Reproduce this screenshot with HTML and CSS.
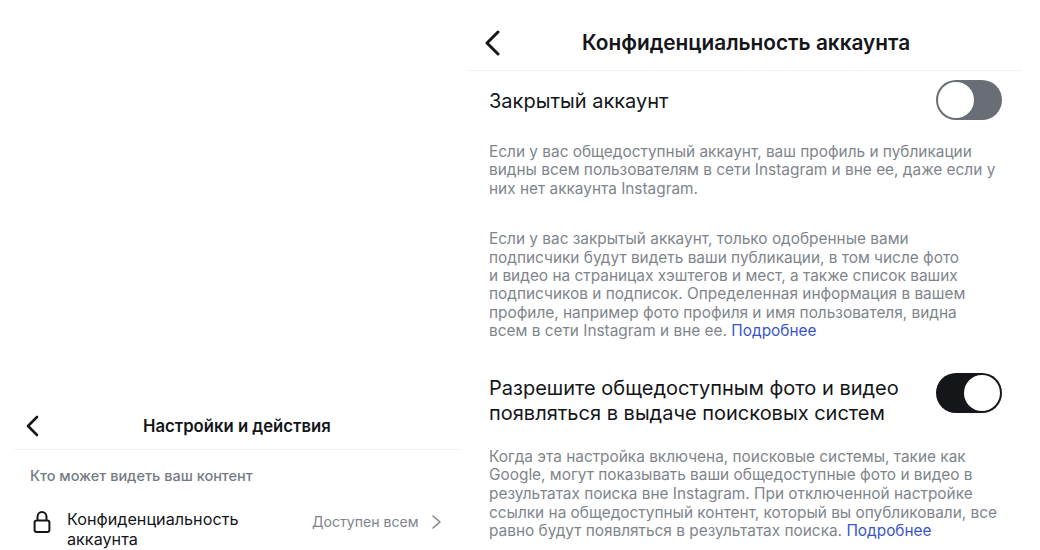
FILE: index.html
```html
<!DOCTYPE html>
<html>
<head>
<meta charset="utf-8">
<title>Настройки</title>
<link rel="stylesheet" href="styles.css">
</head>
<body>
<div class="page">
  <div class="left">
    <div class="left_head">
      <svg class="left_back" width="14" height="22" viewBox="0 0 14 22"><path d="M12 2 L3 11 L12 20" fill="none" stroke="#14161a" stroke-width="2.6" stroke-linecap="round" stroke-linejoin="round"/></svg>
      <div class="left_title">Настройки и действия</div>
    </div>
    <div class="left_label">Кто может видеть ваш контент</div>
    <div class="left_row">
      <svg class="lock" width="18" height="23" viewBox="0 0 18 23"><path d="M4.5 9.5 V6 C4.5 3 6.5 1 9 1 C11.5 1 13.5 3 13.5 6 V9.5 M3.6 9.5 H14.4 C15.6 9.5 16.4 10.3 16.4 11.5 V19 C16.4 20.2 15.6 21 14.4 21 H3.6 C2.4 21 1.6 20.2 1.6 19 V11.5 C1.6 10.3 2.4 9.5 3.6 9.5 Z" fill="none" stroke="#14161a" stroke-width="2"/></svg>
      <div class="left_name">Конфиденциальность<br>аккаунта</div>
      <div class="left_value">Доступен всем</div>
      <svg class="left_more" width="11" height="16" viewBox="0 0 11 16"><path d="M2 2 L9 8 L2 14" fill="none" stroke="#80858c" stroke-width="1.6" stroke-linecap="round" stroke-linejoin="round"/></svg>
    </div>
  </div>
  <div class="right">
    <div class="right_head">
      <svg class="right_back" width="16" height="26" viewBox="0 0 16 26"><path d="M14 2 L3 13 L14 24" fill="none" stroke="#14161a" stroke-width="3" stroke-linecap="round" stroke-linejoin="round"/></svg>
      <div class="right_title">Конфиденциальность аккаунта</div>
    </div>
    <div class="option option_first">
      <div class="option_name">Закрытый аккаунт</div>
      <div class="toggle toggle_off"><div class="knob"></div></div>
    </div>
    <p class="info info_first">Если у вас общедоступный аккаунт, ваш профиль и публикации<br>видны всем пользователям в сети Instagram и вне ее, даже если у<br>них нет аккаунта Instagram.</p>
    <p class="info info_second">Если у вас закрытый аккаунт, только одобренные вами<br>подписчики будут видеть ваши публикации, в том числе фото<br>и видео на страницах хэштегов и мест, а также список ваших<br>подписчиков и подписок. Определенная информация в вашем<br>профиле, например фото профиля и имя пользователя, видна<br>всем в сети Instagram и вне ее. <a href="#">Подробнее</a></p>
    <div class="option option_second">
      <div class="option_name">Разрешите общедоступным фото и видео<br>появляться в выдаче поисковых систем</div>
      <div class="toggle toggle_on"><div class="knob"></div></div>
    </div>
    <p class="info info_third">Когда эта настройка включена, поисковые системы, такие как<br>Google, могут показывать ваши общедоступные фото и видео в<br>результатах поиска вне Instagram. При отключенной настройке<br>ссылки на общедоступный контент, который вы опубликовали, все<br>равно будут появляться в результатах поиска. <a href="#">Подробнее</a></p>
  </div>
</div>
</body>
</html>
```
FILE: styles.css
```css
html, body {
    margin: 0;
    padding: 0;
    background: #fff;
}
.page {
    display: flex;
    width: 1040px;
    height: 550px;
    overflow: hidden;
    font-family: Inter, "Liberation Sans", sans-serif;
    color: #14161a;
}
.left {
    width: 468px;
    padding-left: 14px;
    padding-right: 8px;
    box-sizing: border-box;
    display: flex;
    flex-direction: column;
    justify-content: flex-end;
}
.left_head {
    display: flex;
    align-items: center;
    height: 46px;
    padding-top: 4px;
    padding-left: 11px;
    border-bottom: 1px solid #f3f3f4;
}
.left_back {
    flex: none;
}
.left_title {
    margin-left: 104px;
    font-size: 16.7px;
    font-weight: 600;
    white-space: nowrap;
}
.left_label {
    margin-top: 17px;
    padding-left: 16px;
    font-size: 14.5px;
    line-height: 18px;
    font-weight: 500;
    color: #747a82;
    white-space: nowrap;
}
.left_row {
    display: flex;
    align-items: flex-start;
    margin-top: 25px;
    height: 40px;
    padding-left: 19px;
}
.lock {
    flex: none;
    margin-top: 1px;
}
.left_name {
    width: 245px;
    margin-top: -1px;
    margin-left: 16px;
    font-size: 16.2px;
    line-height: 20px;
    white-space: nowrap;
}
.left_value {
    margin-top: 2px;
    font-size: 14.1px;
    line-height: 20px;
    color: #7f848b;
    white-space: nowrap;
}
.left_more {
    flex: none;
    margin-top: 4px;
    margin-left: 12px;
}
.right {
    width: 554px;
}
.right_head {
    display: flex;
    align-items: center;
    height: 71px;
    padding-left: 16px;
    padding-top: 15px;
    box-sizing: border-box;
    border-bottom: 1px solid #f1f1f2;
}
.right_title {
    margin-left: 82px;
    font-size: 20.8px;
    font-weight: 600;
    white-space: nowrap;
}
.option {
    display: flex;
    justify-content: space-between;
    width: 513px;
    margin-left: 21px;
    font-size: 20px;
    line-height: 25px;
}
.option_first {
    align-items: center;
    margin-top: 8px;
    height: 41px;
}
.option_first .option_name {
    padding-top: 3px;
}
.option_second {
    margin-top: 31px;
    height: 46px;
    padding-top: 4px;
}
.option_second .toggle {
    margin-top: -3px;
}
.toggle {
    width: 66px;
    height: 40px;
    flex: none;
    border-radius: 20px;
    box-sizing: border-box;
    padding: 2px;
    display: flex;
}
.toggle_off {
    background: #686d76;
    justify-content: flex-start;
}
.toggle_on {
    background: #14161a;
    justify-content: flex-end;
}
.knob {
    width: 36px;
    height: 36px;
    border-radius: 50%;
    background: #fff;
}
.info {
    margin: 0 0 0 21px;
    font-size: 15.4px;
    line-height: 18.4px;
    color: #80858c;
    white-space: nowrap;
}
.info_first {
    margin-top: 23px;
}
.info_second {
    margin-top: 32px;
}
.info_third {
    margin-top: 26px;
    line-height: 18.7px;
}
.info a {
    color: #3a55c8;
    text-decoration: none;
}
```
